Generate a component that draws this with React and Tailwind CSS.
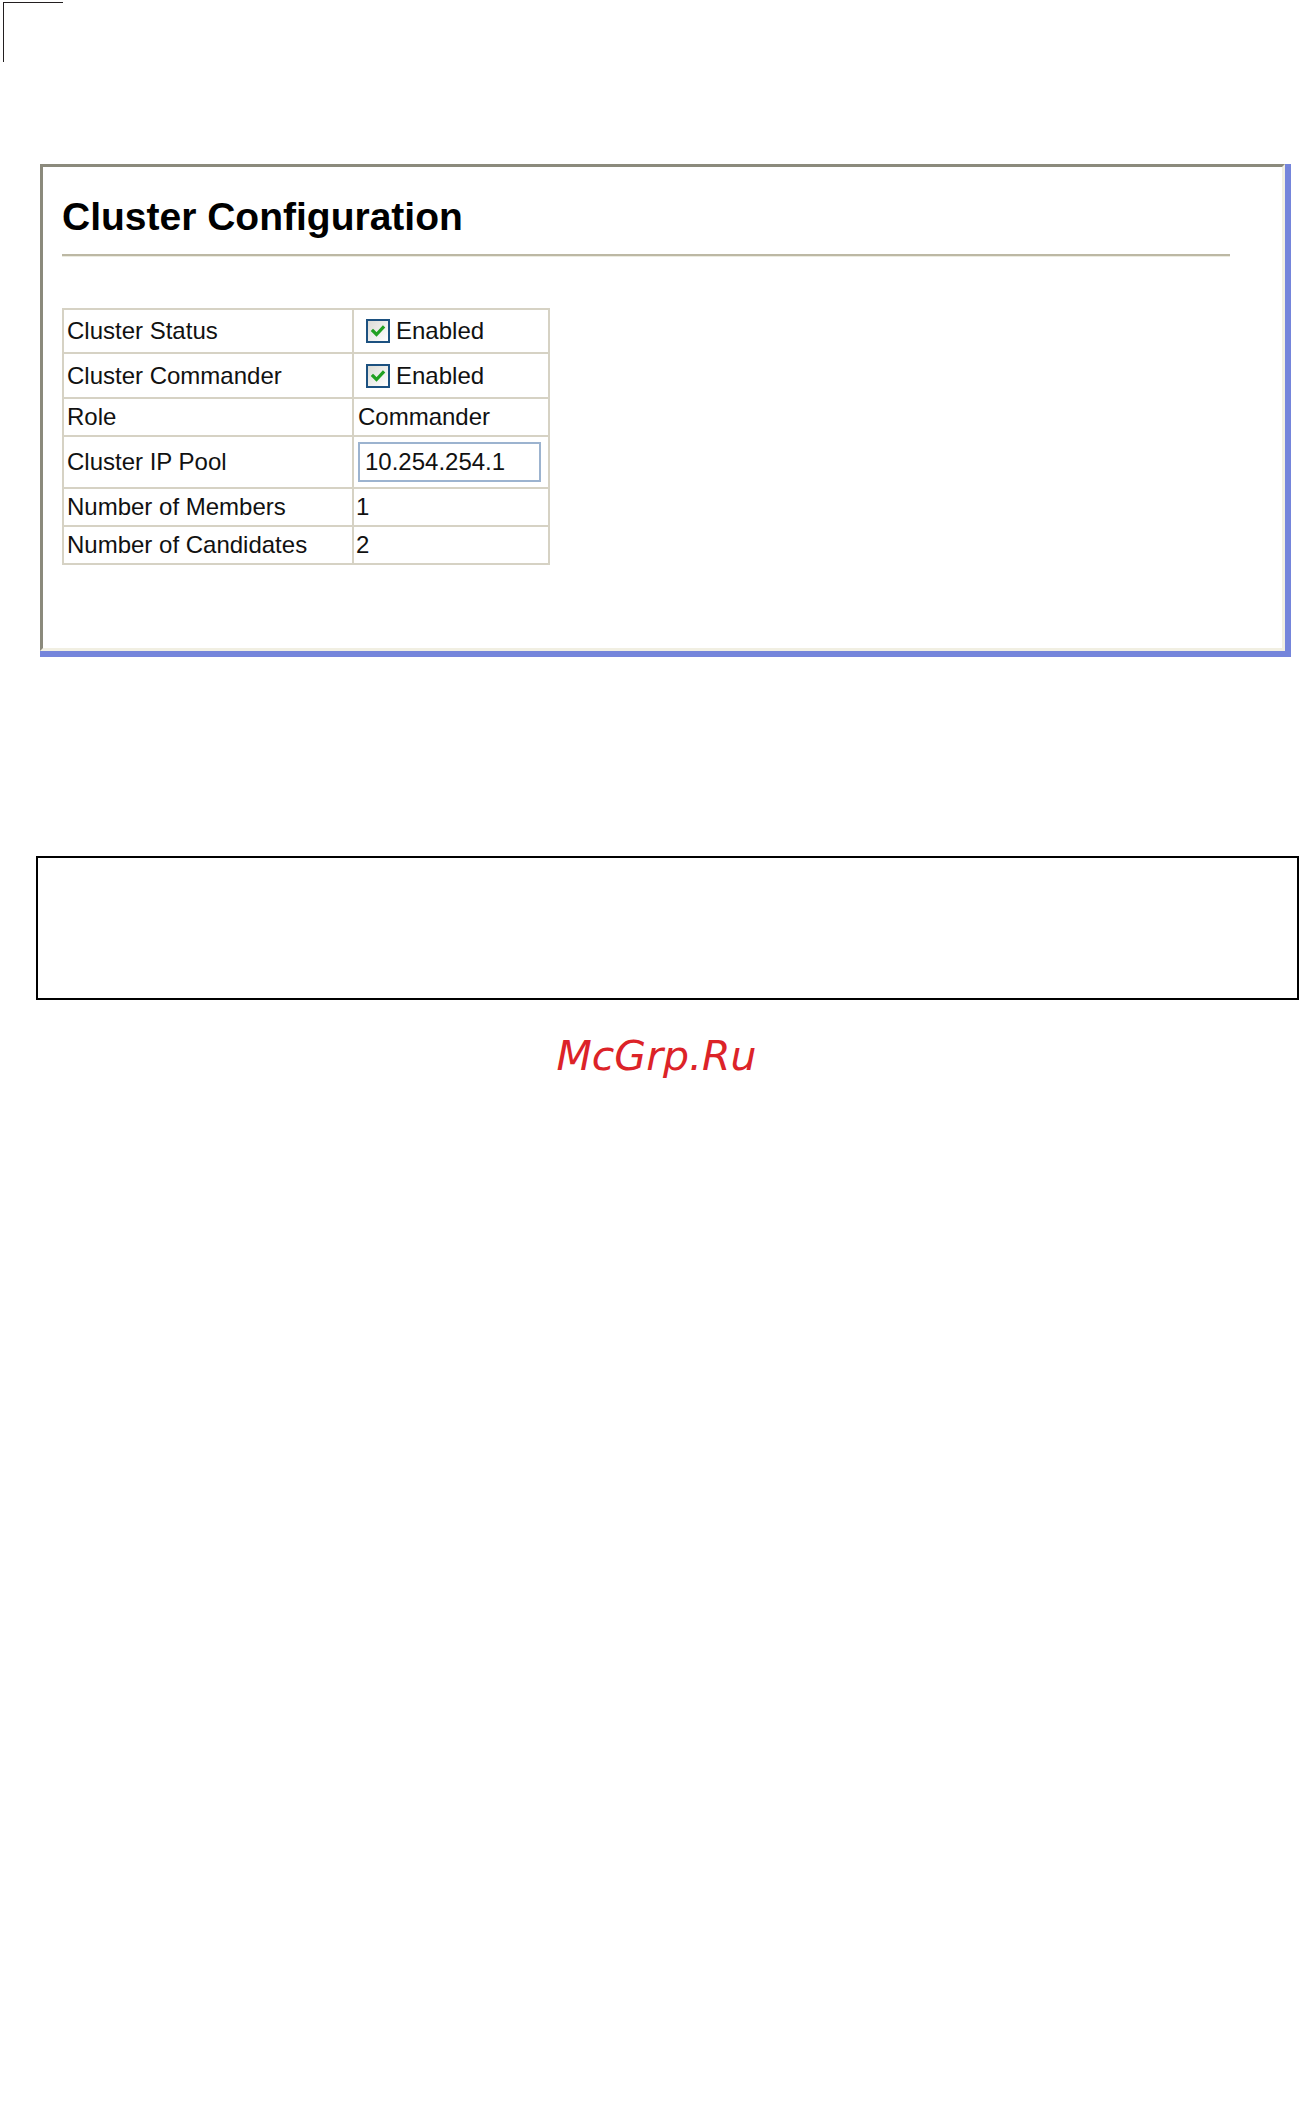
const rows = [
  { label: "Cluster Status", kind: "check", value: "Enabled", h: "h-[42px]" },
  { label: "Cluster Commander", kind: "check", value: "Enabled", h: "h-[43px]" },
  { label: "Role", kind: "text", value: "Commander", pad: "pl-[4px]", h: "h-[36px]" },
  { label: "Cluster IP Pool", kind: "input", value: "10.254.254.1", h: "h-[50px]" },
  { label: "Number of Members", kind: "text", value: "1", pad: "pl-[2px]", h: "h-[36px]" },
  { label: "Number of Candidates", kind: "text", value: "2", pad: "pl-[2px]", h: "h-[36px]" },
];

function CheckBox() {
  return (
    <span className="w-[24px] h-[24px] border-2 border-[#1c5180] bg-gradient-to-br from-[#dcdcd6] to-white flex items-center justify-center shrink-0">
      <svg width="16" height="16" viewBox="0 0 16 16">
        <path d="M3 8 L6.5 11.5 L13 4.5" fill="none" stroke="#21a121" strokeWidth="3.2" strokeLinecap="square" />
      </svg>
    </span>
  );
}

function ValueCell({ row }) {
  if (row.kind === "check") {
    return (
      <div className={`bg-white ${row.h} flex items-center pl-[12px] gap-[6px]`}>
        <CheckBox />
        <span>{row.value}</span>
      </div>
    );
  }
  if (row.kind === "input") {
    return (
      <div className={`bg-white ${row.h} flex items-center pl-[4px]`}>
        <div className="w-[183px] h-[40px] border-2 border-[#9cb3cf] flex items-center pl-[5px]">
          {row.value}
        </div>
      </div>
    );
  }
  return (
    <div className={`bg-white ${row.h} flex items-center ${row.pad}`}>{row.value}</div>
  );
}

export default function App() {
  return (
    <div className="bg-white w-[1300px] h-[2107px] text-[#111]" style={{ fontFamily: '"Liberation Sans", Arial, sans-serif' }}>
      <div className="pt-[2px] pl-[3px]">
        <div className="w-[60px] h-[60px] border-t border-l border-[#231f20]" />
      </div>

      <div className="ml-[40px] mt-[102px] w-[1251px] border-r-[6px] border-b-[6px] border-[#7585db]">
        <div className="h-[487px] border-t-[3px] border-l-[3px] border-[#8b8a7c] border-r-[3px] border-r-[#f1efe2] border-b-[3px] border-b-[#f1efe2] pt-[28px] pl-[19px]">
          <h1 className="text-[39px] leading-[44px] font-bold text-black">Cluster Configuration</h1>
          <div className="mt-[15px] w-[1168px] h-[3px] border-t-2 border-[#bcb8a4] border-b border-b-[#ecebe0]" />

          <div className="mt-[51px] w-[488px] bg-[#d6d2c4] p-[2px] grid grid-cols-[288px_194px] gap-[2px] text-[24px] leading-[28px]">
            {rows.map((r) => (
              <div key={r.label} className="contents">
                <div className={`bg-white ${r.h} flex items-center pl-[3px]`}>{r.label}</div>
                <ValueCell row={r} />
              </div>
            ))}
          </div>
        </div>
      </div>

      <div className="ml-[36px] mt-[199px] w-[1263px] h-[144px] border-2 border-black" />

      <div
        className="mt-[32px] text-center pl-[13px] text-[41px] leading-[48px] italic text-[#dc2328]"
        style={{ fontFamily: '"DejaVu Sans", sans-serif' }}
      >
        McGrp.Ru
      </div>
    </div>
  );
}
